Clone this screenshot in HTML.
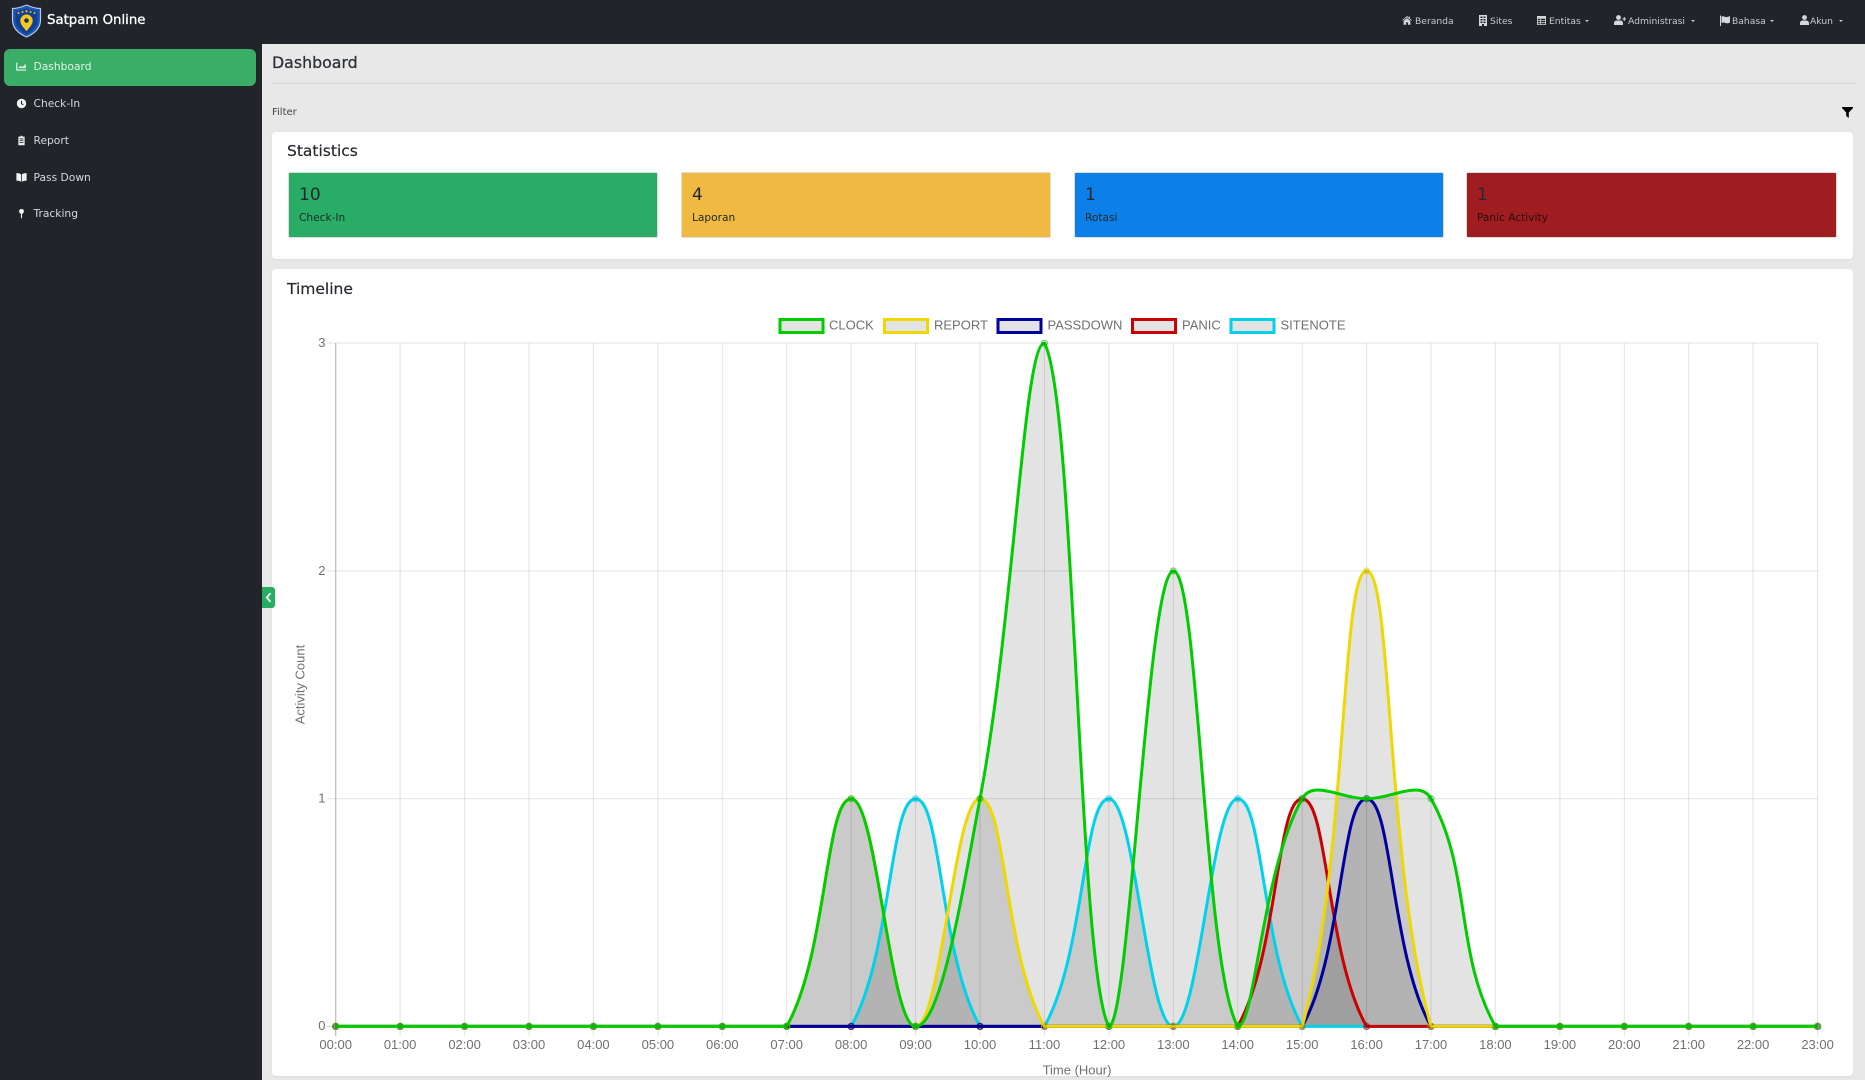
<!DOCTYPE html>
<html lang="id">
<head>
<meta charset="utf-8">
<title>Satpam Online - Dashboard</title>
<style>
html,body{margin:0;padding:0;width:1865px;height:1080px;overflow:hidden;background:#e8e8e8;font-family:"DejaVu Sans","Liberation Sans",sans-serif;color:#212529}
*{box-sizing:border-box}
.abs,nav span,nav svg,aside a,aside svg{position:absolute}
nav{position:absolute;left:0;top:0;width:1865px;height:44px;background:#212529}
nav .brand{left:47px;top:11.500px;font-size:13.300px;line-height:17px;color:#fff;-webkit-text-stroke:.3px #fff;white-space:nowrap}
nav .i{top:14.500px;font-size:9.200px;line-height:13px;color:#c5cacf;white-space:nowrap}
nav .c{top:20px;width:0;height:0;border-left:2px solid transparent;border-right:2px solid transparent;border-top:2px solid #c5cacf}
aside{position:absolute;left:0;top:44px;width:262px;height:1036px;background:#212529}
aside a{left:4px;width:252px;height:37px;border-radius:6px;color:#d5d8da;font-size:10.700px;line-height:35px;padding-left:29.500px;white-space:nowrap}
aside a.on{background:#3aae67;color:#dff3e6}
aside svg{left:11.500px;top:12px;width:11px;height:11px}
.tg{position:absolute;left:262px;top:587px;width:13px;height:21px;background:#27ae60;border-radius:0 3px 3px 0;z-index:5}
h1{position:absolute;left:272px;top:53px;margin:0;font-size:15.800px;line-height:20px;font-weight:400;color:#2b3036;-webkit-text-stroke:.25px #2b3036}
.hr{position:absolute;left:272px;top:83px;width:1585px;height:1px;background:#d3d3d3}
.flt{position:absolute;left:272px;top:106px;font-size:10px;line-height:14px;color:#444}
.card{position:absolute;left:272px;width:1581px;background:#fff;border-radius:4px;box-shadow:0 1px 2px rgba(0,0,0,.06)}
.card h2{position:absolute;left:15px;margin:0;font-size:15.500px;line-height:20px;font-weight:400;color:#262b30;-webkit-text-stroke:.2px #262b30}
.st{position:absolute;top:172px;width:370px;height:66px;border:1px solid #dcdcdc;border-radius:2px}
.st b{position:absolute;left:10px;top:10.500px;font-size:17px;line-height:22px;font-weight:400;color:#23282c}
.st i{position:absolute;left:10px;top:37.500px;font-style:normal;font-size:10.600px;line-height:14px;color:#1d2a24;white-space:nowrap}
#chart{position:absolute;left:0;top:0}
#chart text{font-family:"Liberation Sans",Arial,sans-serif;font-size:13px;fill:#707070}
</style>
</head>
<body>
<nav>
<svg style="left:11px;top:4px" width="31" height="34" viewBox="0 0 31 34">
<path d="M15.500 1C20 3 25 4.500 29.500 4.500V16c0 8-6 13.500-14 17C7.500 29.500 1.500 24 1.500 16V4.500C6 4.500 11 3 15.500 1z" fill="#1a55b5" stroke="#b9c9e6" stroke-width="1.200"/>
<path d="M15.500 4.500C19 6 23 7 26.500 7.200V16c0 6.500-5 11-11 14C9.500 27 4.500 22.500 4.500 16V7.200C8 7 12 6 15.500 4.500z" fill="#123f92"/>
<g fill="#f4c51e"><circle cx="7.500" cy="9" r="1"/><circle cx="11.500" cy="8" r="1"/><circle cx="15.500" cy="7.200" r="1.100"/><circle cx="19.500" cy="8" r="1"/><circle cx="23.500" cy="9" r="1"/></g>
<path d="M15.500 10.500a6.200 6.200 0 0 1 6.200 6.200c0 4-4 7.500-6.200 10.500-2.200-3-6.200-6.500-6.200-10.500a6.200 6.200 0 0 1 6.200-6.200z" fill="#f6c81f"/>
<circle cx="15.500" cy="16.500" r="2.300" fill="#1b2f55"/>
</svg>
<span class="brand">Satpam Online</span>

<svg style="left:1402px;top:16px" width="10" height="9" viewBox="0 0 10 9"><path d="M5 0 .2 4.200l.5.600L5 1.200l4.300 3.600.5-.6L7.900 2.500V.6H6.800v1L5 0zM1.600 5v3.800h2.500V6.200h1.800v2.600h2.500V5L5 2.100 1.600 5z" fill="#d4d8db"/></svg>
<span class="i" style="left:1415px">Beranda</span>

<svg style="left:1479px;top:15px" width="8" height="11" viewBox="0 0 8 11"><path d="M0 0h8v11H5V9H3v2H0zM1.500 1.500v1.500h2V1.500zm3 0v1.500h2V1.500zm-3 2.500v1.500h2V4zm3 0v1.500h2V4zm-3 2.500V8h2V6.500zm3 0V8h2V6.500z" fill="#d4d8db" fill-rule="evenodd"/></svg>
<span class="i" style="left:1490px">Sites</span>

<svg style="left:1537px;top:16px" width="9" height="9" viewBox="0 0 9 9"><path d="M0 0h9v9H0zM.8 2.800v1.400h2.500V2.800zm3.200 0v1.400h4.200V2.800zM.8 5v1.300h2.500V5zm3.200 0v1.300h4.200V5zM.8 7.100v1.200h2.500V7.100zm3.200 0v1.200h4.200V7.100z" fill="#d4d8db" fill-rule="evenodd"/></svg>
<span class="i" style="left:1549px">Entitas</span><span class="c" style="left:1585px"></span>

<svg style="left:1614px;top:15px" width="12" height="10" viewBox="0 0 12 10"><circle cx="4.500" cy="2.500" r="2.400" fill="#d4d8db"/><path d="M0 10V8.200C0 6.400 1.500 5.500 3 5.500h3c1.500 0 3 .9 3 2.700V10zM9.800 2v1.500H8.300v1h1.500V6h1V4.500H12v-1h-1.200V2z" fill="#d4d8db"/></svg>
<span class="i" style="left:1628px">Administrasi</span><span class="c" style="left:1691px"></span>

<svg style="left:1720px;top:15px" width="10" height="11" viewBox="0 0 10 11"><path d="M0 .5h1V11H0zM1.500 1.500C3.500.6 5 2.500 7 2c1-.2 2-.6 3-1v6.500C8.500 8.300 7 8.700 5.500 8 4 7.400 2.800 7.300 1.500 8z" fill="#d4d8db"/></svg>
<span class="i" style="left:1732px">Bahasa</span><span class="c" style="left:1770px"></span>

<svg style="left:1800px;top:15px" width="9" height="10" viewBox="0 0 9 10"><circle cx="4.500" cy="2.500" r="2.400" fill="#d4d8db"/><path d="M0 10V8.200C0 6.400 1.500 5.500 3 5.500h3c1.500 0 3 .9 3 2.700V10z" fill="#d4d8db"/></svg>
<span class="i" style="left:1810px">Akun</span><span class="c" style="left:1839px"></span>
</nav>

<aside>
<a class="on" style="top:5px"><svg viewBox="0 0 14 13"><path d="M1 1.500v9.500h12" fill="none" stroke="#e6f5eb" stroke-width="1.500"/><path d="M3 8.500 5.800 5.500l2.300 1.800L12.500 3v5.500z" fill="#e6f5eb"/></svg>Dashboard</a>
<a style="top:42px"><svg viewBox="0 0 14 13"><circle cx="7" cy="6.500" r="6" fill="#f2f2f2"/><path d="M7 3v3.700l2.300 1.400" fill="none" stroke="#212529" stroke-width="1.300"/></svg>Check-In</a>
<a style="top:79px"><svg viewBox="0 0 14 13"><path d="M3 1.500h2.400a1.700 1.700 0 0 1 3.200 0H11v11H3z" fill="#ececec"/><path d="M4.500 4.500h5M4.500 6.800h5M4.500 9.100h5" stroke="#212529" stroke-width="1"/></svg>Report</a>
<a style="top:116px"><svg viewBox="0 0 14 13"><path d="M.5 1C2.800 1 5 1.300 6.500 2.600V12C5 11 2.800 10.500.5 10.500zM13.500 1C11.200 1 9 1.300 7.500 2.600V12c1.500-1 3.700-1.500 6-1.500z" fill="#f2f2f2"/></svg>Pass Down</a>
<a style="top:152px"><svg viewBox="0 0 14 13"><circle cx="7" cy="3.800" r="3.100" fill="#f2f2f2"/><path d="M6.300 6h1.400v6.500H6.300z" fill="#f2f2f2"/></svg>Tracking</a>
</aside>

<h1>Dashboard</h1>
<div class="hr"></div>
<div class="flt">Filter</div>
<svg class="abs" style="left:1842px;top:107px" width="11" height="11" viewBox="0 0 11 11"><path d="M0 0h11v1L6.800 5.500V11L4.200 9V5.500L0 1z" fill="#000"/></svg>

<div class="card" style="top:132px;height:127px"><h2 style="top:9px">Statistics</h2></div>
<div class="st" style="left:288px;background:#29ad66"><b>10</b><i>Check-In</i></div>
<div class="st" style="left:681px;background:#f0b942"><b>4</b><i>Laporan</i></div>
<div class="st" style="left:1074px;background:#0d7fe8"><b>1</b><i>Rotasi</i></div>
<div class="st" style="left:1466px;width:371px;background:#9f1d20"><b>1</b><i style="color:#2a0c0c">Panic Activity</i></div>

<div class="card" style="top:269px;height:807px"><h2 style="top:10px">Timeline</h2></div>

<div class="tg"><svg class="abs" style="left:3px;top:5px" width="7" height="11" viewBox="0 0 7 11"><path d="M5.500 1.200 1.800 5.500l3.700 4.300" fill="none" stroke="#fff" stroke-width="1.800"/></svg></div>

<svg id="chart" width="1865" height="1080" viewBox="0 0 1865 1080">
<g stroke="rgba(0,0,0,.11)" stroke-width="1" fill="none">
<path d="M327 343H1817.600M327 571H1817.600M327 798.700H1817.600"/>
<path d="M400.100 343V1036M464.600 343V1036M529 343V1036M593.400 343V1036M657.900 343V1036M722.300 343V1036M786.700 343V1036M851.100 343V1036M915.600 343V1036M980 343V1036M1044.400 343V1036M1108.900 343V1036M1173.300 343V1036M1237.700 343V1036M1302.200 343V1036M1366.600 343V1036M1431 343V1036M1495.400 343V1036M1559.900 343V1036M1624.300 343V1036M1688.700 343V1036M1753.100 343V1036M1817.600 343V1036"/>
</g>
<path d="M327 1026.400H1817.600" stroke="rgba(0,0,0,.18)" fill="none"/>
<path d="M335.700 343V1036" stroke="rgba(0,0,0,.25)" stroke-width="1.300" fill="none"/>

<g id="fills"></g>
<g id="series"></g>

<g>
<rect x="780" y="319.500" width="43" height="13" fill="#e3e3e3" stroke="#00cc00" stroke-width="3"/>
<rect x="884.500" y="319.500" width="43" height="13" fill="#e3e3e3" stroke="#efd800" stroke-width="3"/>
<rect x="998" y="319.500" width="43" height="13" fill="#e3e3e3" stroke="#00009c" stroke-width="3"/>
<rect x="1132.500" y="319.500" width="43" height="13" fill="#e3e3e3" stroke="#cc0000" stroke-width="3"/>
<rect x="1231" y="319.500" width="43" height="13" fill="#e3e3e3" stroke="#00d2ec" stroke-width="3"/>
<text x="829" y="329.500">CLOCK</text>
<text x="934" y="329.500">REPORT</text>
<text x="1047.500" y="329.500">PASSDOWN</text>
<text x="1182" y="329.500">PANIC</text>
<text x="1280.500" y="329.500">SITENOTE</text>
</g>
<g text-anchor="end">
<text x="325.500" y="347">3</text>
<text x="325.500" y="575">2</text>
<text x="325.500" y="802.500">1</text>
<text x="325.500" y="1030">0</text>
</g>
<g text-anchor="middle">
<text x="335.700" y="1049">00:00</text><text x="400.100" y="1049">01:00</text><text x="464.600" y="1049">02:00</text><text x="529" y="1049">03:00</text><text x="593.400" y="1049">04:00</text><text x="657.900" y="1049">05:00</text><text x="722.300" y="1049">06:00</text><text x="786.700" y="1049">07:00</text><text x="851.100" y="1049">08:00</text><text x="915.600" y="1049">09:00</text><text x="980" y="1049">10:00</text><text x="1044.400" y="1049">11:00</text><text x="1108.900" y="1049">12:00</text><text x="1173.300" y="1049">13:00</text><text x="1237.700" y="1049">14:00</text><text x="1302.200" y="1049">15:00</text><text x="1366.600" y="1049">16:00</text><text x="1431" y="1049">17:00</text><text x="1495.400" y="1049">18:00</text><text x="1559.900" y="1049">19:00</text><text x="1624.300" y="1049">20:00</text><text x="1688.700" y="1049">21:00</text><text x="1753.100" y="1049">22:00</text><text x="1817.600" y="1049">23:00</text>
<text x="1077" y="1074.500">Time (Hour)</text>
<text transform="translate(304.500 684.500) rotate(-90)">Activity Count</text>
</g>
</svg>

<script>
(function(){
var X=function(i){return 335.7+64.43*i},Y=function(v){return 1026.4-227.7*v};
function arr(o){var a=[];for(var i=0;i<24;i++)a.push(o[i]||0);return a}
var sets=[
 {c:'#00d2ec',d:arr({9:1,12:1,14:1})},
 {c:'#cc0000',d:arr({15:1})},
 {c:'#00009c',d:arr({16:1})},
 {c:'#efd800',d:arr({8:1,10:1,16:2})},
 {c:'#00cc00',d:arr({8:1,10:1,11:3,13:2,15:1,16:1,17:1})}
];
var T=0.4,f=document.getElementById('fills'),g=document.getElementById('series'),NS='http://www.w3.org/2000/svg';
function el(p,n,a){var e=document.createElementNS(NS,n);for(var k in a)e.setAttribute(k,a[k]);p.appendChild(e);return e}
function clampY(y){return Math.max(343,Math.min(1026.4,y))}
sets.forEach(function(S){
 var P=S.d.map(function(v,i){return{x:X(i),y:Y(v)}}),C=[];
 P.forEach(function(p,i){
  var a=P[i-1]||p,b=P[i+1]||p;
  var d1=Math.hypot(p.x-a.x,p.y-a.y),d2=Math.hypot(b.x-p.x,b.y-p.y),s=d1+d2||1;
  var f1=T*d1/s,f2=T*d2/s;
  C.push({px:p.x-f1*(b.x-a.x),py:clampY(p.y-f1*(b.y-a.y)),nx:p.x+f2*(b.x-a.x),ny:clampY(p.y+f2*(b.y-a.y))});
 });
 var d='';
 for(var i=0;i<23;i++){d+='C'+C[i].nx.toFixed(2)+' '+C[i].ny.toFixed(2)+' '+C[i+1].px.toFixed(2)+' '+C[i+1].py.toFixed(2)+' '+P[i+1].x.toFixed(2)+' '+P[i+1].y.toFixed(2)}
 var head='M'+P[0].x.toFixed(2)+' '+P[0].y.toFixed(2);
 el(f,'path',{d:head+d+'L'+P[23].x+' 1026.4L'+P[0].x+' 1026.4Z',fill:'rgba(0,0,0,.11)',stroke:'none'});
 el(g,'path',{d:head+d,fill:'none',stroke:S.c,'stroke-width':3,'stroke-linejoin':'round'});
 P.forEach(function(p){
  el(g,'circle',{cx:p.x.toFixed(2),cy:p.y.toFixed(2),r:3,fill:'rgba(0,0,0,.1)',stroke:S.c,'stroke-opacity':.6,'stroke-width':1.2});
 });
});
})();
</script>
</body>
</html>
